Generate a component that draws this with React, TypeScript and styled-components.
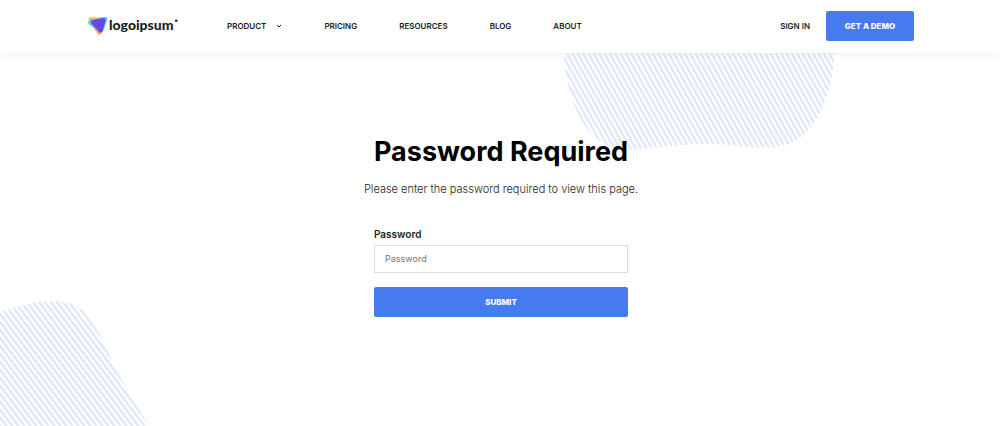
import React from "react";
import styled, { createGlobalStyle } from "styled-components";

const Global = createGlobalStyle`
  *, *::before, *::after { box-sizing: border-box; }
  body { margin: 0; background: #fff; color: #1e1e1e; font-family: Inter, "Liberation Sans", sans-serif; }
`;

const Page = styled.div`
  position: relative;
  min-height: 100vh;
  overflow: hidden;
`;

const Header = styled.header`
  position: relative;
  z-index: 1;
  background: #fff;
  box-shadow: 0 2px 8px rgba(0, 0, 0, 0.05);
`;

const Bar = styled.div`
  display: flex;
  align-items: center;
  max-width: 828px;
  margin: 0 auto;
  padding: 11px 0 12px;
`;

const Brand = styled.a`
  display: flex;
  width: 93px;
  margin-right: 48px;
  svg { display: block; }
`;

const Nav = styled.nav`
  display: flex;
  flex: 1;
  gap: 42px;
`;

const NavLink = styled.a`
  display: flex;
  align-items: center;
  gap: 10px;
  color: #1e1e1e;
  font-size: 8px;
  font-weight: 600;
  line-height: 12px;
  text-decoration: none;
  white-space: nowrap;
`;

const Button = styled.button<{ $wide?: boolean }>`
  width: ${(p) => (p.$wide ? "100%" : "88px")};
  height: 30px;
  padding: 0;
  border: 0;
  border-radius: 2px;
  background: #467aef;
  color: #fff;
  font-family: inherit;
  font-size: 8px;
  font-weight: 800;
  line-height: 12px;
`;

const Actions = styled.div`
  display: flex;
  align-items: center;
  gap: 16px;
`;

const Main = styled.main`
  position: relative;
  display: flex;
  flex-direction: column;
  align-items: center;
  padding: 82px 16px 64px 18px;
`;

const Title = styled.h1`
  margin: 0;
  color: #000;
  font-size: 27px;
  font-weight: 700;
  line-height: 34px;
`;

const Lead = styled.p`
  margin: 12px 0 31px;
  font-size: 11px;
  font-weight: 300;
  line-height: 16px;
`;

const Form = styled.form`
  display: flex;
  flex-direction: column;
  width: 100%;
  max-width: 254px;
`;

const Label = styled.label`
  margin-bottom: 4px;
  font-size: 10px;
  font-weight: 600;
  line-height: 13px;
`;

const Input = styled.input`
  width: 100%;
  height: 28px;
  margin-bottom: 14px;
  padding: 0 10px 1px;
  border: 1px solid #ddd;
  border-radius: 0;
  background: #fff;
  font-family: inherit;
  font-size: 9px;
  &::placeholder { color: #757575; }
`;

const Blob = styled.svg<{ $corner: "top" | "bottom" }>`
  position: absolute;
  ${(p) => (p.$corner === "top" ? "top: 53px; left: calc(50% + 60px);" : "bottom: 0; left: 0;")}
`;

export default function App() {
  return (
    <Page>
      <Global />
      <Blob $corner="top" width="280" height="100" viewBox="0 0 280 100" aria-hidden="true">
        <defs>
          <pattern id="hatchTop" width="5.35" height="10.7" patternUnits="userSpaceOnUse" patternTransform="skewX(29)">
            <path d="M1.5 0V10.7" stroke="#dce6fb" strokeWidth="2.4" />
          </pattern>
        </defs>
        <path d="M4 0C6 48 27 97 66 96C97 96 122 90 153 91C180 92 194 96 216 94C254 90 271 47 275 0Z" fill="url(#hatchTop)" />
      </Blob>
      <Blob $corner="bottom" width="150" height="126" viewBox="0 0 150 126" aria-hidden="true">
        <defs>
          <pattern id="hatchBottom" width="6" height="10" patternUnits="userSpaceOnUse" patternTransform="skewX(37)">
            <path d="M1.5 0V10" stroke="#dae5fb" strokeWidth="2.5" />
          </pattern>
        </defs>
        <path d="M0 12C28 2 63 -6 82 10C97 22 108 54 120 77L149 126H0Z" fill="url(#hatchBottom)" />
      </Blob>
      <Header>
        <Bar>
          <Brand href="#" aria-label="logoipsum">
            <svg width="93" height="22" viewBox="0 0 93 22">
              <path d="M4.5 2.2L10 2.5L19 2.2Q20.8 2.4 20.3 5L15.5 18.5Q13.6 21.5 11.5 19L3 6.2Q1.8 3 4.5 2.2Z" fill="#f5b84e" />
              <path d="M3.5 5.5L19 2Q21.4 2.2 21.2 5L17.5 15.5Q16.5 18 14.5 17L3 9.2Q1 7 3.5 5.5Z" fill="#4dc9f4" />
              <path d="M6.5 5L17.5 3.1Q19.8 3 19.5 5.6L16.5 16Q15 18.8 12.8 16.8L5.6 8.4Q4 5.8 6.5 5Z" fill="#6846ec" />
              <text x="23" y="15" fontFamily="Lato" fontWeight="900" fontSize="14" fill="#1e1e1e">logoipsum</text>
              <circle cx="90.2" cy="5.8" r="1.3" fill="#1e1e1e" />
            </svg>
          </Brand>
          <Nav>
            <NavLink href="#">
              PRODUCT
              <svg width="6" height="4" viewBox="0 0 6 4" fill="none" stroke="#1e1e1e"><path d="M1 1L3 3L5 1" /></svg>
            </NavLink>
            <NavLink href="#">PRICING</NavLink>
            <NavLink href="#">RESOURCES</NavLink>
            <NavLink href="#">BLOG</NavLink>
            <NavLink href="#">ABOUT</NavLink>
          </Nav>
          <Actions>
            <NavLink href="#">SIGN IN</NavLink>
            <Button type="button">GET A DEMO</Button>
          </Actions>
        </Bar>
      </Header>
      <Main>
        <Title>Password Required</Title>
        <Lead>Please enter the password required to view this page.</Lead>
        <Form onSubmit={(e) => e.preventDefault()}>
          <Label htmlFor="password">Password</Label>
          <Input id="password" type="password" placeholder="Password" />
          <Button type="submit" $wide>SUBMIT</Button>
        </Form>
      </Main>
    </Page>
  );
}
